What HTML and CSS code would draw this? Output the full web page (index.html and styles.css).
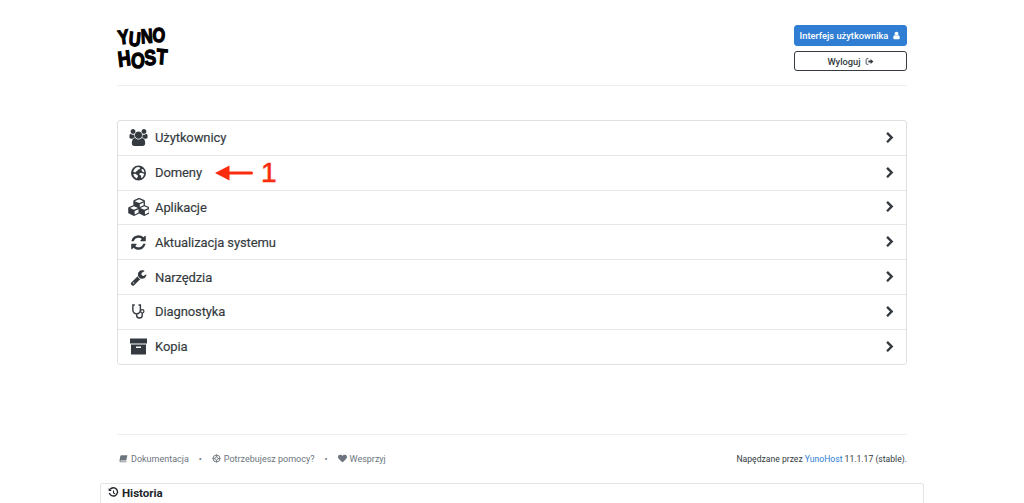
FILE: index.html
```html
<!DOCTYPE html>
<html lang="pl">
<head>
<meta charset="utf-8">
<title>YunoHost</title>
<link rel="stylesheet" href="styles.css">
</head>
<body>
<svg class="defs" width="0" height="0">
  <symbol id="i-chev" viewBox="0 0 1792 1792"><path d="M1363 877l-742 742q-19 19-45 19t-45-19l-166-166q-19-19-19-45t19-45l531-531-531-531q-19-19-19-45t19-45l166-166q19-19 45-19t45 19l742 742q19 19 19 45t-19 45z"/></symbol>
</svg>
<div class="page">
  <header class="top">
    <a class="logo">
      <span class="logo-line"><i>Y</i><i>U</i><i>N</i><i>O</i></span>
      <span class="logo-line logo-two"><i>H</i><i>O</i><i>S</i><i>T</i></span>
    </a>
    <div class="actions">
      <a class="btn btn-primary">Interfejs użytkownika
        <svg class="bi" viewBox="0 0 1792 1792"><path d="M1536 1399q0 109-62.500 187t-150.500 78h-854q-88 0-150.500-78t-62.500-187q0-85 8.500-160.500t31.500-152 58.500-131 94-89 134.500-34.500q131 128 313 128t313-128q76 0 134.500 34.500t94 89 58.500 131 31.500 152 8.500 160.500zm-256-887q0 159-112.500 271.500t-271.500 112.500-271.500-112.500-112.500-271.500 112.500-271.500 271.500-112.500 271.500 112.500 112.500 271.500z"/></svg>
      </a>
      <a class="btn btn-outline">Wyloguj
        <svg class="bi" viewBox="0 0 16 16"><path class="ln" d="M6 3H3.500Q2 3 2 4.500v7Q2 13 3.500 13H6"/><path d="M6 6.200h4V3.500L15 8l-5 4.500V9.800H6z"/></svg>
      </a>
    </div>
  </header>

  <ul class="menu">
    <li class="row">
      <svg class="ic" viewBox="0 0 1920 1792"><path d="M593 896q-162 5-265 128h-134q-82 0-138-40.500t-56-118.500q0-353 124-353 6 0 43.500 21t97.500 42.500 119 21.500q67 0 133-23-5 37-5 66 0 139 81 256zm1071 637q0 120-73 189.500t-194 69.500h-874q-121 0-194-69.500t-73-189.500q0-53 3.500-103.500t14-109 26.500-108.500 43-97.500 62-81 85.500-53.500 111.500-20q10 0 43 21.500t73 48 107 48 135 21.500 135-21.500 107-48 73-48 43-21.500q61 0 111.500 20t85.500 53.500 62 81 43 97.500 26.500 108.500 14 109 3.500 103.500zm-1024-1277q0 106-75 181t-181 75-181-75-75-181 75-181 181-75 181 75 75 181zm704 384q0 159-112.500 271.500t-271.500 112.500-271.500-112.500-112.500-271.500 112.500-271.500 271.500-112.500 271.500 112.500 112.500 271.500zm576 225q0 78-56 118.500t-138 40.500h-134q-103-123-265-128 81-117 81-256 0-29-5-66 66 23 133 23 59 0 119-21.500t97.500-42.500 43.500-21q124 0 124 353zm-128-609q0 106-75 181t-181 75-181-75-75-181 75-181 181-75 181 75 75 181z"/></svg>
      <span class="label">Użytkownicy</span>
      <svg class="chev"><use href="#i-chev"/></svg>
    </li>
    <li class="row row-note">
      <svg class="ic ic-globe" viewBox="0 0 16 16"><path fill-rule="evenodd" d="M8 .5a7.500 7.500 0 1 0 0 15 7.500 7.500 0 0 0 0-15zM6.300 2.300a5.900 5.900 0 0 1 2.500-.1l1 .9-.8 1.200-1.800.4-.4 1.300-1.400.4-.6 1.300-1.200-1-.9.200A5.900 5.900 0 0 1 5 2.900zM2.700 9.300l1.600-.5 2.300.9 1 1.200-.7 1.300-.5 1.300A5.900 5.900 0 0 1 2.700 9.300zm8.200-5.100 1.500-.2a5.900 5.900 0 0 1 1.500 3.400l-1.400-.3-1.200-1.100zm-1.800 4 1.900-.4 2.800 1.300a5.900 5.900 0 0 1-3.300 4.200l.2-1.700-.6-1.300-1.200-.6z"/></svg>
      <span class="label">Domeny</span>
      <svg class="note-arrow" viewBox="0 0 38 16"><path d="M0 8 14.500.5v6h22a1.500 1.500 0 0 1 0 3h-22v6z"/></svg>
      <span class="note-num">1</span>
      <svg class="chev"><use href="#i-chev"/></svg>
    </li>
    <li class="row">
      <svg class="ic ic-wide" viewBox="0 0 2048 1792"><path d="M640 1632l384-192v-314l-384 164v342zm-64-454l404-173-404-173-404 173zm1088 454l384-192v-314l-384 164v342zm-64-454l404-173-404-173-404 173zm-448-293l384-165v-266l-384 164v267zm-64-380l441-189-441-189-441 189zm1088 518v416q0 36-19 67t-52 47l-448 224q-25 14-57 14t-57-14l-448-224q-4-2-7-4-2 2-7 4l-448 224q-25 14-57 14t-57-14l-448-224q-33-16-52-47t-19-67v-416q0-38 21.500-70t56.500-48l434-186v-400q0-38 21.500-70t56.500-48l448-192q23-10 50-10t50 10l448 192q35 16 56.500 48t21.500 70v400l434 186q36 16 57 48t21 70z"/></svg>
      <span class="label">Aplikacje</span>
      <svg class="chev"><use href="#i-chev"/></svg>
    </li>
    <li class="row">
      <svg class="ic" viewBox="0 0 1792 1792"><path d="M1639 1056q0 5-1 7-64 268-268 434.500t-478 166.500q-146 0-282.500-55t-243.500-157l-129 129q-19 19-45 19t-45-19-19-45v-448q0-26 19-45t45-19h448q26 0 45 19t19 45-19 45l-137 137q71 66 161 102t187 36q134 0 250-65t186-179q11-17 53-117 8-23 30-23h192q13 0 22.500 9.500t9.500 22.500zm25-800v448q0 26-19 45t-45 19h-448q-26 0-45-19t-19-45 19-45l138-138q-148-137-349-137-134 0-250 65t-186 179q-11 17-53 117-8 23-30 23h-199q-13 0-22.500-9.500t-9.500-22.500v-7q65-268 270-434.500t480-166.500q146 0 284 55.500t245 156.500l130-129q19-19 45-19t45 19 19 45z"/></svg>
      <span class="label">Aktualizacja systemu</span>
      <svg class="chev"><use href="#i-chev"/></svg>
    </li>
    <li class="row">
      <svg class="ic" viewBox="0 0 1792 1792"><path d="M448 1472q0-26-19-45t-45-19-45 19-19 45 19 45 45 19 45-19 19-45zm644-420l-682 682q-37 37-90 37-52 0-91-37l-106-108q-38-36-38-90 0-53 38-91l681-681q39 98 114.500 173.500t173.500 114.500zm634-435q0 39-23 106-47 134-164.500 217.500t-258.500 83.500q-185 0-316.500-131.500t-131.500-316.500 131.500-316.500 316.500-131.500q58 0 121.500 16.500t107.500 46.500q16 11 16 28t-16 28l-293 169v224l193 107q5-3 79-48.500t135.500-81 70.500-35.500q15 0 23.500 10t8.500 25z"/></svg>
      <span class="label">Narzędzia</span>
      <svg class="chev"><use href="#i-chev"/></svg>
    </li>
    <li class="row">
      <svg class="ic ic-steth" viewBox="0 0 18 16"><path class="ln" d="M5 1H3v5.500a4 4 0 0 0 8 0V1H9"/><path class="ln" d="M7 10.500V12a3 3 0 0 0 6 0V9.500"/><circle cx="13" cy="7.800" r="1.800"/></svg>
      <span class="label">Diagnostyka</span>
      <svg class="chev"><use href="#i-chev"/></svg>
    </li>
    <li class="row">
      <svg class="ic" viewBox="0 0 19 16"><path fill-rule="evenodd" d="M1 0h17v5H1zM2 6h15v10H2zM7 8v1.500h5V8z"/></svg>
      <span class="label">Kopia</span>
      <svg class="chev"><use href="#i-chev"/></svg>
    </li>
  </ul>

  <footer class="foot">
    <nav class="links">
      <a class="link"><svg class="fi" viewBox="0 0 16 16"><path d="M4 2h11l-2.200 9.500H3.200q-1 0-.9 1 .1.800 1.100.8h10.300l-.3 1.200H3q-2.500 0-2.100-2.800L2.500 3.200Q2.800 2 4 2z"/></svg>Dokumentacja</a>
      <span class="dot">•</span>
      <a class="link"><svg class="fi fi-ring" viewBox="0 0 16 16"><circle cx="8" cy="8" r="6.200"/><circle cx="8" cy="8" r="2.800"/><path d="M8 1v4M8 11v4M1 8h4M11 8h4"/></svg>Potrzebujesz pomocy?</a>
      <span class="dot">•</span>
      <a class="link"><svg class="fi" viewBox="0 0 1792 1792"><path d="M896 1664q-26 0-44-18l-624-602q-10-8-27.500-26t-55.500-65.500-68-97.500-53.500-121-23.500-138q0-220 127-344t351-124q62 0 126.500 21.500t120 58 95.500 68.500 76 68q36-36 76-68t95.500-68.500 120-58 126.500-21.500q224 0 351 124t127 344q0 221-229 450l-623 600q-18 18-44 18z"/></svg>Wesprzyj</a>
    </nav>
    <p class="power">Napędzane przez <a class="brand">YunoHost</a> 11.1.17 (stable).</p>
  </footer>
</div>
<section class="history">
  <svg class="hi" viewBox="0 0 16 16"><path class="ln2" d="M3 3.500A6 6 0 1 1 2 8.500"/><path d="M1 1.500l4.500 4.300H1z"/><path class="ln2 thin" d="M8 5v3.500l2.500 1.500"/></svg>
  <strong>Historia</strong>
</section>
</body>
</html>
```
FILE: styles.css
```css
* { box-sizing: border-box; }
html, body { margin: 0; padding: 0; }
body {
  height: 503px;
  overflow: hidden;
  background: #fff;
  color: #343a40;
  font-family: Roboto, "Noto Sans", sans-serif;
}
.defs { position: absolute; }
.page { width: 790px; margin: 0 auto; }

.top {
  height: 86px;
  padding-top: 25px;
  display: flex;
  justify-content: space-between;
  align-items: flex-start;
  border-bottom: 1px solid #eeeeee;
}
.logo {
  display: flex;
  flex-direction: column;
  margin-top: 2px;
  margin-left: 1px;
  color: #000;
  font-family: "Liberation Sans", sans-serif;
  font-weight: 700;
  font-size: 20px;
  line-height: 21px;
  -webkit-text-stroke: 1.300px #000;
  transform: scaleX(.82);
  transform-origin: 0 0;
}
.logo-line { display: flex; gap: 0; }
.logo-line i { display: inline-block; font-style: normal; }
.logo-line i:nth-child(1) { transform: rotate(-8deg); }
.logo-line i:nth-child(2) { transform: translateY(2px) rotate(6deg); }
.logo-line i:nth-child(3) { transform: translateY(-1px) rotate(-4deg); }
.logo-line i:nth-child(4) { transform: translateY(-2px) rotate(5deg); }
.logo-two { font-size: 21.500px; line-height: 23px; }

.actions { width: 113px; display: flex; flex-direction: column; gap: 5px; }
.btn {
  height: 21px;
  border-radius: 3px;
  font-size: 9.300px;
  font-weight: 500;
  display: flex;
  align-items: center;
  justify-content: center;
  gap: 4px;
}
.btn-primary { background: #2f7ed3; border: 1px solid #2f7ed3; color: #fff; }
.btn-primary .bi { fill: #fff; }
.btn-outline { background: #fff; border: 1px solid #343a40; color: #343a40; height: 20px; }
.btn-outline .bi { fill: #343a40; }
.bi { width: 9px; height: 9px; }
.ln { fill: none; stroke: currentColor; stroke-width: 1.500; }

.menu {
  list-style: none;
  margin: 34px 0 0;
  padding: 0;
  border: 1px solid #dfdfdf;
  border-radius: 3px;
}
.row {
  position: relative;
  height: 34.800px;
  padding: 0 10px 0 11px;
  display: flex;
  align-items: center;
  border-bottom: 1px solid #e6e6e6;
  font-size: 13px;
  font-weight: 400;
  letter-spacing: -.1px;
}
.row:last-child { border-bottom: 0; height: 34px; }
.ic { width: 19px; height: 17px; fill: #343a40; flex: none; }
.ic-globe { height: 16px; }
.ic-wide { width: 21px; height: 18px; margin-left: -1px; margin-right: -1px; }
.ic-steth { color: #343a40; fill: #fff; stroke: #343a40; height: 15px; }
.ic-steth circle { stroke-width: 1.300; }
.label { margin-left: 7px; flex: 1; color: #343a40; -webkit-text-stroke: .15px #343a40; }
.chev { width: 12px; height: 12px; fill: #343a40; flex: none; }
.note-arrow {
  position: absolute;
  left: 97px;
  top: 9px;
  width: 38px;
  height: 16px;
  fill: #f92c0d;
}
.note-num {
  position: absolute;
  left: 143px;
  top: 0;
  color: #f92c0d;
  font-family: "Liberation Sans", sans-serif;
  font-size: 28px;
  font-weight: 400;
  line-height: 34px;
  -webkit-text-stroke: .6px #f92c0d;
}

.foot {
  margin-top: 69px;
  border-top: 1px solid #eeeeee;
  height: 49px;
  padding: 0 0 0 2px;
  display: flex;
  justify-content: space-between;
  align-items: center;
  font-size: 9px;
}
.links { display: flex; align-items: center; color: #6c757d; }
.link { display: flex; align-items: center; gap: 3px; }
.fi { width: 9px; height: 9px; fill: #6c757d; }
.fi-ring { fill: none; stroke: #6c757d; stroke-width: 1.600; }
.dot { margin: 0 10px; }
.power { margin: 0; color: #343a40; font-size: 8.600px; }
.brand { color: #2f7ed3; }

.history {
  width: 824px;
  height: 21px;
  margin: 0 auto;
  padding: 0 7px 2px;
  display: flex;
  align-items: center;
  gap: 3px;
  border: 1px solid #e4e4e4;
  border-bottom: 0;
  border-radius: 3px 3px 0 0;
  font-size: 11.500px;
  color: #212529;
}
.hi { width: 11px; height: 11px; fill: #212529; }
.ln2 { fill: none; stroke: #212529; stroke-width: 2; }
.thin { stroke-width: 1.500; }
```
